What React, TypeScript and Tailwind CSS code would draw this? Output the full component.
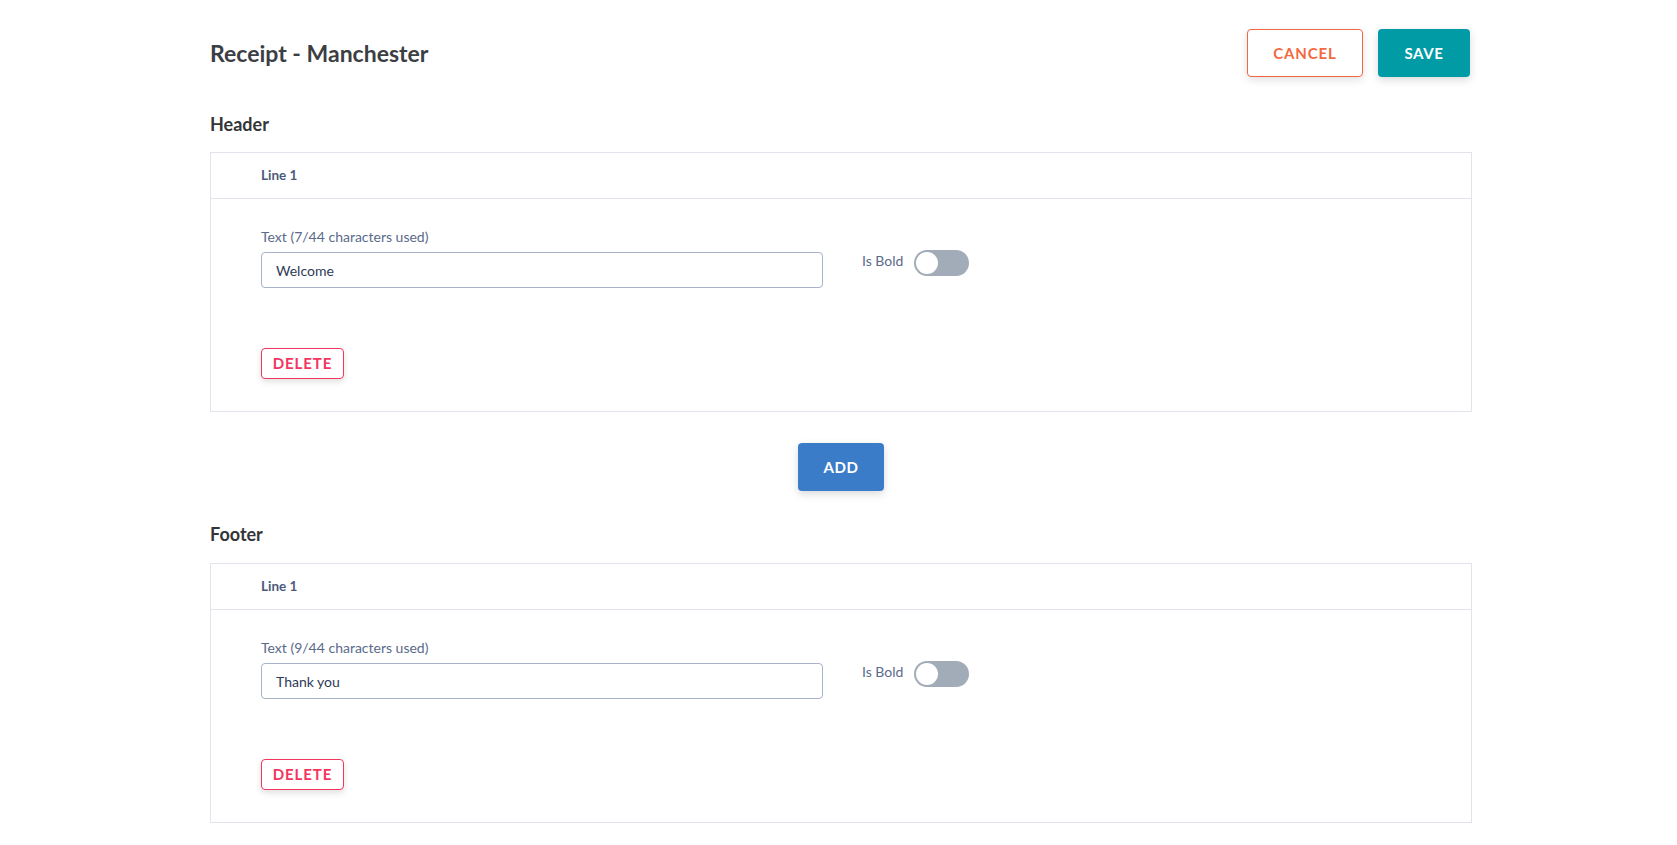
import React from 'react';

type LineProps = {
  label: string;
  value: string;
};

function LineCard({ label, value }: LineProps) {
  return (
    <div className="border border-[#e3e3ec] bg-white">
      <div className="h-[46px] border-b border-[#e3e3ec] pl-[50px] flex items-center">
        <span className="text-[13.5px] font-bold text-[#4b5a7c]">Line 1</span>
      </div>
      <div className="pl-[50px] pt-[28px] pb-[32px]">
        <div className="flex items-start">
          <div className="w-[562px]">
            <div className="text-[14px] leading-[20px] text-[#5b6a8b]">{label}</div>
            <input
              readOnly
              value={value}
              className="mt-[5px] h-[36px] w-full rounded-[4px] border border-[#a6b3c8] px-[14px] text-[14px] text-[#2e3a57] outline-none"
            />
          </div>
          <div className="ml-[39px] mt-[23px] flex items-start gap-[11px]">
            <span className="mt-[1px] text-[14px] leading-[20px] text-[#5b6a8b]">Is Bold</span>
            <div className="flex h-[26px] w-[55px] items-center rounded-full bg-[#a2abb8] px-[2px]">
              <div className="h-[22px] w-[22px] rounded-full bg-white" />
            </div>
          </div>
        </div>
        <button className="mt-[60px] h-[31px] w-[83px] rounded-[4px] border border-[#f2365f] bg-white text-[15px] font-bold tracking-[0.06em] text-[#f2365f] shadow-[0_3px_6px_rgba(0,0,0,0.12)]">
          DELETE
        </button>
      </div>
    </div>
  );
}

export default function App() {
  return (
    <div className="min-h-screen bg-white font-['Lato','Liberation_Sans',sans-serif]">
      <div className="ml-[210px] w-[1262px] pt-[29px] pb-[24px]">
        <div className="flex h-[48px] items-center justify-between">
          <h1 className="text-[23px] font-bold text-[#3b3e43]">Receipt - Manchester</h1>
          <div className="mr-[2px] flex gap-[15px]">
            <button className="h-[48px] w-[116px] rounded-[4px] border border-[#f4683f] bg-white text-[15px] font-bold tracking-[0.06em] text-[#f4683f] shadow-[0_3px_8px_rgba(0,0,0,0.12)]">
              CANCEL
            </button>
            <button className="h-[48px] w-[92px] rounded-[4px] bg-[#009ba5] text-[15px] font-bold tracking-[0.04em] text-white shadow-[0_3px_8px_rgba(0,0,0,0.15)]">
              SAVE
            </button>
          </div>
        </div>

        <h2 className="mt-[35px] text-[18px] leading-[24px] font-bold text-[#333538]">Header</h2>
        <div className="mt-[16px]">
          <LineCard label="Text (7/44 characters used)" value="Welcome" />
        </div>

        <div className="mt-[31px] flex justify-center">
          <button className="h-[48px] w-[86px] rounded-[4px] bg-[#3b7cc9] text-[15px] font-bold tracking-[0.04em] text-white shadow-[0_3px_8px_rgba(0,0,0,0.15)]">
            ADD
          </button>
        </div>

        <h2 className="mt-[31px] text-[18px] leading-[24px] font-bold text-[#333538]">Footer</h2>
        <div className="mt-[17px]">
          <LineCard label="Text (9/44 characters used)" value="Thank you" />
        </div>
      </div>
    </div>
  );
}
